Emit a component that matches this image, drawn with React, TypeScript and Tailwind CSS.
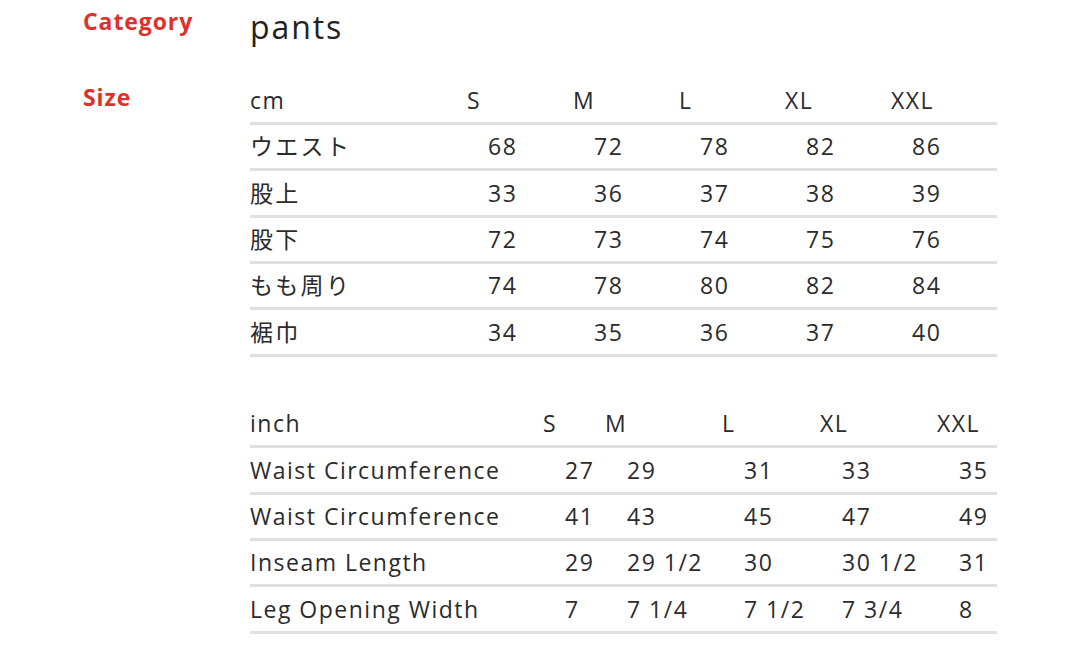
import React from "react";

const font = { fontFamily: '"Open Sans", "Noto Sans CJK JP", sans-serif' };

const cmSizes = ["S", "M", "L", "XL", "XXL"];
const cmRows: [string, string[]][] = [
  ["ウエスト", ["68", "72", "78", "82", "86"]],
  ["股上", ["33", "36", "37", "38", "39"]],
  ["股下", ["72", "73", "74", "75", "76"]],
  ["もも周り", ["74", "78", "80", "82", "84"]],
  ["裾巾", ["34", "35", "36", "37", "40"]],
];

const inchRows: [string, string[]][] = [
  ["Waist Circumference", ["27", "29", "31", "33", "35"]],
  ["Waist Circumference", ["41", "43", "45", "47", "49"]],
  ["Inseam Length", ["29", "29 1/2", "30", "30 1/2", "31"]],
  ["Leg Opening Width", ["7", "7 1/4", "7 1/2", "7 3/4", "8"]],
];

const rowCls =
  "h-[46.4px] border-b-[3px] border-[#e0e0e2] flex items-center text-[23px] tracking-[0.065em] text-[#2b2b2b]";

function CmTable() {
  return (
    <div className="w-[747px]">
      <div className={rowCls}>
        <div className="w-[217px]">cm</div>
        {cmSizes.map((s) => (
          <div key={s} className="w-[106px]">
            {s}
          </div>
        ))}
      </div>
      {cmRows.map(([label, vals]) => (
        <div key={label} className={rowCls}>
          <div className="w-[217px] tracking-[0.1em]">{label}</div>
          {vals.map((v, i) => (
            <div key={i} className="w-[106px] pl-[21px]">
              {v}
            </div>
          ))}
        </div>
      ))}
    </div>
  );
}

const inchCols = ["w-[62px]", "w-[117px]", "w-[98px]", "w-[117px]", "w-[60px]"];

function InchTable() {
  return (
    <div className="w-[747px]">
      <div className={rowCls}>
        <div className="w-[293px]">inch</div>
        {cmSizes.map((s, i) => (
          <div key={s} className={inchCols[i]}>
            {s}
          </div>
        ))}
      </div>
      {inchRows.map(([label, vals], r) => (
        <div key={r} className={rowCls}>
          <div className="w-[293px]">{label}</div>
          {vals.map((v, i) => (
            <div key={i} className={`${inchCols[i]} pl-[22px] whitespace-nowrap`}>
              {v}
            </div>
          ))}
        </div>
      ))}
    </div>
  );
}

export default function App() {
  return (
    <div className="w-[1080px] h-[656px] bg-white overflow-hidden pl-[83px]" style={font}>
      <div className="grid grid-cols-[167px_1fr]">
        <div className="h-[78.4px] pt-[6px] text-[23px] leading-[30px] font-bold tracking-[0.04em] text-[#e0302b]">
          Category
        </div>
        <div className="pt-[6px] text-[32px] leading-[42px] tracking-[0.06em] text-[#222]">pants</div>

        <div className="pt-[4px] text-[23px] leading-[30px] font-bold tracking-[0.04em] text-[#e0302b]">
          Size
        </div>
        <div className="flex flex-col gap-[45px]">
          <CmTable />
          <InchTable />
        </div>
      </div>
    </div>
  );
}
